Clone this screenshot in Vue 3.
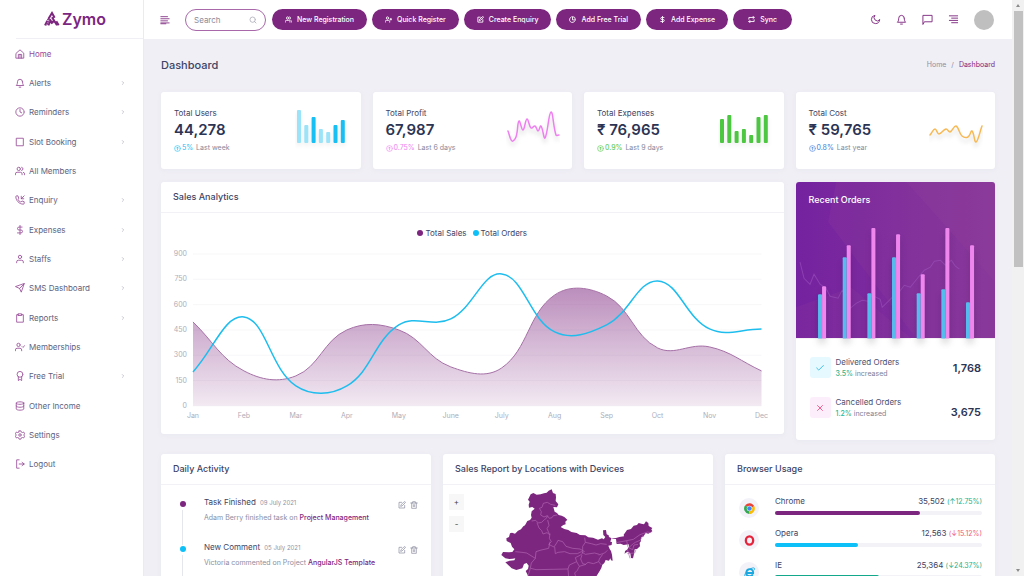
<script setup>
import { h } from 'vue'

const paths = {
  home: 'M3 10 12 2l9 8v12H3zM8 22v-9h8v9M12 13v9',
  bell: 'M18 9a6 6 0 0 0-12 0c0 7-3 9-3 9h18s-3-2-3-9M10 22h4',
  clock: 'M22 12a10 10 0 1 1-20 0 10 10 0 0 1 20 0M12 6v6l4 2',
  square: 'M4 3h16v18H4z',
  users: 'M17 21v-2a4 4 0 0 0-4-4H5a4 4 0 0 0-4 4v2M13 7a4 4 0 1 1-8 0 4 4 0 0 1 8 0M23 21v-2a4 4 0 0 0-3-3.9M16 3.1a4 4 0 0 1 0 7.8',
  phone: 'M22 17v3a2 2 0 0 1-2 2C10 22 2 13 2 4a2 2 0 0 1 2-2h3l2 6-2 2c1 3 4 6 7 7l2-2zM22 2l-7 7M15 3v6h6',
  dollar: 'M12 1v22M17 5H9.500a3.500 3.500 0 0 0 0 7h5a3.500 3.500 0 0 1 0 7H6',
  user: 'M20 21v-2a4 4 0 0 0-4-4H8a4 4 0 0 0-4 4v2M16 7a4 4 0 1 1-8 0 4 4 0 0 1 8 0',
  send: 'M22 2 11 13M22 2l-7 20-4-9-9-4z',
  clipboard: 'M8 4H4v18h16V4h-4M8 2h8v4H8z',
  userCheck: 'M16 21v-2a4 4 0 0 0-4-4H5a4 4 0 0 0-4 4v2M12.500 7a4 4 0 1 1-8 0 4 4 0 0 1 8 0M17 11l2 2 4-4',
  userPlus: 'M16 21v-2a4 4 0 0 0-4-4H5a4 4 0 0 0-4 4v2M12.500 7a4 4 0 1 1-8 0 4 4 0 0 1 8 0M20 8v6M17 11h6',
  award: 'M19 8a7 7 0 1 1-14 0 7 7 0 0 1 14 0M8 14v9l4-3 4 3v-9',
  database: 'M21 5c0 1.700-4 3-9 3S3 6.700 3 5s4-3 9-3 9 1.300 9 3zM3 5v14c0 1.700 4 3 9 3s9-1.300 9-3V5M3 12c0 1.700 4 3 9 3s9-1.300 9-3',
  settings: 'M15 12a3 3 0 1 1-6 0 3 3 0 0 1 6 0M10 2h4l1 3 3 1 3-1 2 4-2 3 2 3-2 4-3-1-3 1-1 3h-4l-1-3-3-1-3 1-2-4 2-3-2-3 2-4 3 1 3-1z',
  logout: 'M10 2H4v20h6M10 12h12M17 8l5 4-5 4',
  edit: 'M11 4H3v17h17v-8M18.500 2.500a2 2 0 0 1 3 3L12 15l-4 1 1-4z',
  pie: 'M21 16A10 10 0 1 1 8 3M22 12A10 10 0 0 0 12 2v10z',
  sync: 'M17 1l4 4-4 4M3 11V5h18M7 23l-4-4 4-4M21 13v6H3',
  moon: 'M21 13A9 9 0 1 1 11 3a7 7 0 0 0 10 10z',
  chat: 'M2 22V3h20v14H6z',
  menuLeft: 'M2 4h16M2 9h20M2 14h16M2 19h20M2 21h12',
  menuRight: 'M3 4h18M8 9h13M3 14h18M8 19h13',
  search: 'M19 11a8 8 0 1 1-16 0 8 8 0 0 1 16 0M21 21l-4-4',
  up: 'M22 12a10 10 0 1 1-20 0 10 10 0 0 1 20 0M12 17V8M8 11l4-4 4 4',
  trash: 'M2 6h20M5 6v16h14V6M8 6V2h8v4M10 11v6M14 11v6',
  chevron: 'M9 6l6 6-6 6',
  check: 'M20 6 9 17l-5-5',
  cross: 'M18 6 6 18M6 6l12 12'
}
const Icon = (props) =>
  h('svg', { class: 'icon', viewBox: '0 0 24 24', 'aria-hidden': 'true' }, [h('path', { d: paths[props.name] })])
Icon.props = ['name']

const menu = [
  ['Home', 'home', false], ['Alerts', 'bell', true], ['Reminders', 'clock', true],
  ['Slot Booking', 'square', true], ['All Members', 'users', false], ['Enquiry', 'phone', true],
  ['Expenses', 'dollar', true], ['Staffs', 'user', true], ['SMS Dashboard', 'send', true],
  ['Reports', 'clipboard', true], ['Memberships', 'userCheck', false], ['Free Trial', 'award', true],
  ['Other Income', 'database', false], ['Settings', 'settings', false], ['Logout', 'logout', false]
]
const actions = [
  ['New Registration', 'users'], ['Quick Register', 'userPlus'], ['Create Enquiry', 'edit'],
  ['Add Free Trial', 'pie'], ['Add Expense', 'dollar'], ['Sync', 'sync']
]
const tools = [['Dark mode', 'moon'], ['Notifications', 'bell'], ['Messages', 'chat'], ['Panel', 'menuRight']]

// Cubic spline through the points, with handles scaled by neighbour distance
function spline(pts, t = 0.4) {
  const handles = pts.map((p, i) => {
    const a = pts[i - 1] || p
    const b = pts[i + 1] || p
    const d1 = Math.hypot(p[0] - a[0], p[1] - a[1])
    const d2 = Math.hypot(b[0] - p[0], b[1] - p[1])
    const f1 = (t * d1) / (d1 + d2)
    const f2 = (t * d2) / (d1 + d2)
    const dx = b[0] - a[0]
    const dy = b[1] - a[1]
    return [[p[0] - f1 * dx, p[1] - f1 * dy], [p[0] + f2 * dx, p[1] + f2 * dy]]
  })
  return pts.reduce((d, p, i) =>
    i ? `${d} C${handles[i - 1][1]} ${handles[i][0]} ${p}` : `M${p}`, '')
}

const months = ['Jan', 'Feb', 'Mar', 'Apr', 'May', 'June', 'July', 'Aug', 'Sep', 'Oct', 'Nov', 'Dec']
const monthX = [32, 83, 135, 186, 238, 290, 341, 394, 446, 497, 549, 601]
const ticks = [900, 750, 600, 450, 300, 150, 0]
const tickY = (v) => 161 - (v / 900) * 152
const salesPath = spline([77, 126, 131, 85, 85, 122, 123, 50, 51, 103, 102, 126].map((y, i) => [monthX[i], y]))
const ordersPath = spline([127, 72, 141, 141, 80, 74, 29, 87, 80, 36, 84, 84].map((y, i) => [monthX[i], y]))

const stats = [
  { title: 'Total Users', value: '44,278', pct: '5%', note: 'Last week', tone: 'cyan',
    bars: [33, 18, 26, 14, 11, 18, 23], pale: [0, 1, 3, 4] },
  { title: 'Total Profit', value: '67,987', pct: '0.75%', note: 'Last 6 days', tone: 'pink',
    line: [[2, 22], [6, 32], [10, 28], [13, 12], [17, 21], [21, 10], [25, 19], [29, 17], [32, 22], [35, 17], [39, 29], [45, 3], [50, 26], [53, 26]] },
  { title: 'Total Expenses', value: '₹ 76,965', pct: '0.9%', note: 'Last 9 days', tone: 'green',
    bars: [24, 28, 12, 14, 8, 26, 28], pale: [] },
  { title: 'Total Cost', value: '₹ 59,765', pct: '0.8%', note: 'Last year', tone: 'amber',
    line: [[1, 26], [6, 20], [10, 25], [17, 20], [21, 23], [27, 17], [33, 27], [39, 28], [43, 22], [47, 33], [53, 17]] }
]
const blueTops = [112, 75, 111, 75, 111, 107, 120]
const pinkTops = [104, 63, 46, 52, 92, 46, 63]
const activity = [
  ['Task Finished', '09 July 2021', 'Adam Berry finished task on', 'Project Management', 'purple'],
  ['New Comment', '05 July 2021', 'Victoria commented on Project', 'AngularJS Template', 'blue']
]
const browsers = [
  { name: 'Chrome', count: '35,502', change: '(↑12.75%)', up: true, share: 70, tone: 'purple' },
  { name: 'Opera', count: '12,563', change: '(↓15.12%)', up: false, share: 40, tone: 'blue' },
  { name: 'IE', count: '25,364', change: '(↓24.37%)', up: true, share: 50, tone: 'teal' }
]
</script>

<template>
  <div class="app">
    <aside class="sidebar">
      <a class="brand" href="#">
        <svg class="mark" viewBox="0 0 48 44" aria-hidden="true">
          <path class="stroke" d="M3 41 10 27M13 22 24 4l8 14M13 41l7-14 5 9M24 17l15 24M32 30h-8M44 41l-7-12" />
          <path class="fine" d="M9 24h10M8 41l9-17" />
        </svg>
        <span>Zymo</span>
      </a>
      <nav class="menu">
        <a v-for="[label, icon, more] in menu" :key="label" href="#" :class="{ active: label === 'Home' }">
          <Icon :name="icon" /><span>{{ label }}</span><Icon v-if="more" class="more" name="chevron" />
        </a>
      </nav>
    </aside>

    <div class="main">
      <header class="topbar">
        <button class="plain" aria-label="Toggle menu"><Icon name="menuLeft" /></button>
        <label class="search">
          <input type="text" placeholder="Search" aria-label="Search" />
          <Icon name="search" />
        </label>
        <div class="actions">
          <button v-for="[label, icon] in actions" :key="label"><Icon :name="icon" />{{ label }}</button>
        </div>
        <div class="tools">
          <button v-for="[label, icon] in tools" :key="label" class="plain" :aria-label="label"><Icon :name="icon" /></button>
          <span class="avatar"></span>
        </div>
      </header>

      <main>
        <div class="heading">
          <h1>Dashboard</h1>
          <nav class="crumbs"><a href="#">Home</a><span>/</span><a href="#" class="current">Dashboard</a></nav>
        </div>

        <div class="grid">
          <section v-for="s in stats" :key="s.title" class="card stat" :class="s.tone">
            <div>
              <h2>{{ s.title }}</h2>
              <strong>{{ s.value }}</strong>
              <p><Icon name="up" /><b>{{ s.pct }}</b> {{ s.note }}</p>
            </div>
            <svg class="spark" viewBox="0 0 54 44" aria-hidden="true">
              <template v-if="s.bars">
                <rect v-for="(b, i) in s.bars" :key="i" :class="{ pale: s.pale.includes(i) }"
                  :x="2 + i * 7.3" :y="34 - b" width="4" :height="b" rx="1" />
              </template>
              <path v-else :d="spline(s.line)" />
            </svg>
          </section>

          <section class="card sales">
            <h2 class="title">Sales Analytics</h2>
            <div class="legend"><span class="purple">Total Sales</span><span class="blue">Total Orders</span></div>
            <svg class="chart" viewBox="0 0 623 189" role="img" aria-label="Sales and orders by month">
              <defs>
                <linearGradient id="area" gradientUnits="userSpaceOnUse" x1="0" y1="43" x2="0" y2="161">
                  <stop class="area-top" offset="0" />
                  <stop class="area-bottom" offset="1" />
                </linearGradient>
              </defs>
              <g v-for="t in ticks" :key="t">
                <path class="rule" :d="`M32 ${tickY(t)}H601`" />
                <text class="tick" x="26" :y="tickY(t) + 2">{{ t }}</text>
              </g>
              <path :d="`${salesPath}V161H32z`" fill="url(#area)" />
              <path class="sales-line" :d="salesPath" />
              <path class="orders-line" :d="ordersPath" />
              <text v-for="(m, i) in months" :key="m" class="month" :x="monthX[i]" y="173">{{ m }}</text>
            </svg>
          </section>

          <section class="card orders">
            <div class="panel">
              <h2>Recent Orders</h2>
              <svg viewBox="0 0 199 156" aria-hidden="true">
                <path class="facet" d="M40 0h159v156H120L32 40z" />
                <path class="facet" d="M0 125 55 105l60 51H0zM110 0h89v100z" />
                <path class="trace" d="M4 80l4 16 6 6 4-10 6 10 6 4 4 8 8 2 4-8 6 6 2 12 6-5 6-3 6 1 4-6 8 4 2 8 10-10 6-4 6-8 6 2 8-10 6-7 6-3 4-6 6-1 5 5 6-5 4 6 4 3" />
                <g v-for="(y, i) in blueTops" :key="i">
                  <path class="b-blue" :d="`M${22 + i * 24.6} 156V${y + 1}q0-1 1-1h2q1 0 1 1V156z`" />
                  <path class="b-pink" :d="`M${26 + i * 24.6} 156V${pinkTops[i] + 1}q0-1 1-1h2q1 0 1 1V156z`" />
                </g>
              </svg>
            </div>
            <div class="order">
              <span class="tile ok"><Icon name="check" /></span>
              <div><h3>Delivered Orders</h3><p><b>3.5%</b> increased</p></div>
              <strong>1,768</strong>
            </div>
            <div class="order">
              <span class="tile bad"><Icon name="cross" /></span>
              <div><h3>Cancelled Orders</h3><p><b>1.2%</b> increased</p></div>
              <strong class="low">3,675</strong>
            </div>
          </section>
        </div>

        <div class="grid thirds">
          <section class="card">
            <h2 class="title">Daily Activity</h2>
            <ul class="timeline">
              <li v-for="[title, date, text, link, tone] in activity" :key="title" :class="tone">
                <div>
                  <h3>{{ title }} <time>{{ date }}</time></h3>
                  <p>{{ text }} <a href="#">{{ link }}</a></p>
                </div>
                <button class="plain" aria-label="Edit"><Icon name="edit" /></button>
                <button class="plain" aria-label="Delete"><Icon name="trash" /></button>
              </li>
            </ul>
          </section>

          <section class="card">
            <h2 class="title">Sales Report by Locations with Devices</h2>
            <div class="map">
              <div class="zoom"><button aria-label="Zoom in">+</button><button aria-label="Zoom out">-</button></div>
              <svg viewBox="9 130 810 300" role="img" aria-label="Map of India">
                <path class="land" d="M272 158l8-4 10 5 12-1 10-3 8-2 6-6 9-4 4 11 8 3 1 10-1 11 8 10-4 9-11-1 4 14 7 4 5 6 9 2 8 4 9 8-6 6 1 8-7 2-8 6 11 6 12 3 9 6 16 3 10 6 16 1 9 6 14 1 15 6 12-4 5 3 5-7-6-6-1-14 9-1 2 13 6 3 1 5 8 4 13-1 10-3 14-2-1-5 10-14 12-3 8-10 10-2 5-6 8 2 8 2 6-9 7 5 1 9 11 6-3 4 3 6-12 7-8-2-7 11-6 1-2 14-3 3 1 11-9 8-7 1-2 14-3 13-6-1-2-14-7-5-7 3-3 4 1-9 6-4 6-9-1-7-15 2-9-4-12 1-2-15-9-1-5-1-3 10 5 1-1 9-10 2 4 10 4 6 3 11 2 18-5-1-2-6-4 7-10-2-4 9-6 5-3 10-5 9-10 16H265l-8-16 7-6 2-10-6-8-8 3-5 13-18 5-14-5-19-18 13-5 14-1 3-6-8 1-10 1-12-2-12-10 5-9 18 1 10-1 6-8-7-8-4-11-12-6-1-8 8-4 3-11 6-2 9 3 9-9 9-4 7-9 5-3 7-13 8-3 5-7-2-8 2-11 9-8-7-5-10 2-1-9 3-9-5-6z" />
                <path class="border" d="M298 200l8-3 4-12 12-3 10 6 14 3M298 200l6 10-2 10 10 6 10-4 6 8 8-2 4-6 12-2M275 238l12-2 8 8 10-2 8-8 6-4 4-8M291 243l6 16 8 8 4 10 12-4 8 6-8-18 6-10-4-16M330 276l-2 14 6 10-8 8 16 8 8-12 4-8 14 4 10 14 20 6 22 2 14 8M330 300l-4 20-26 6-12 4-2 20-26-16-14-2-20-2M286 350l-12 14-4 20-8 24M344 316l2 20 8-4 20-2 16 6 22 0 12-6 12 8 28-4 14 4M434 288l2 14-8 12 0 20-6 6M436 302l18 4 14 4 14-4 18 2M476 340l18-6 8-8M488 338l-10 14-2 8-16 6-16-4-8 6-8-2-6-14 4-12M422 340l-16 8 4 12-22 10-4 12-96 2-16-4M384 382l2 26M410 360l8 14-6 12-8 8 4 14M418 374l20-6M476 360l8 10M528 303l32-6 20-4 20-14 22-8 12 2M560 297l4 20M566 318l14-12 6-4 14-6 10-16M566 318l12 6 4-14 12-2M562 336l22-2 4-10M562 322l4 14 4 14" />
              </svg>
            </div>
          </section>

          <section class="card">
            <h2 class="title">Browser Usage</h2>
            <div v-for="b in browsers" :key="b.name" class="browser">
              <span class="logo">
                <svg v-if="b.name === 'Chrome'" viewBox="0 0 24 24" aria-hidden="true">
                  <path fill="#ea4335" d="M12 12 2.500 5a12 12 0 0 1 20 2z" />
                  <path fill="#fbbc05" d="M12 12 22.500 7A12 12 0 0 1 11 24z" />
                  <path fill="#34a853" d="M12 12 11 24A12 12 0 0 1 2.500 5z" />
                  <circle fill="#fff" cx="12" cy="12" r="6" /><circle fill="#4285f4" cx="12" cy="12" r="5" />
                </svg>
                <svg v-else-if="b.name === 'Opera'" viewBox="0 0 24 24" aria-hidden="true">
                  <ellipse cx="12" cy="12" rx="8" ry="9" fill="none" stroke="#e5243b" stroke-width="5" />
                </svg>
                <svg v-else viewBox="0 0 24 24" aria-hidden="true">
                  <path fill="none" stroke="#1ba8e0" stroke-width="4" d="M5 13h15c1-11-15-11-15 0 0 9 12 9 14 3" />
                  <path fill="none" stroke="#1ba8e0" stroke-width="2" d="M3 22c-6-5 8-20 18-20 3 0 2 3 1 5" />
                </svg>
              </span>
              <div class="usage">
                <div class="row"><span>{{ b.name }}</span><span>{{ b.count }} <small :class="{ up: b.up }">{{ b.change }}</small></span></div>
                <div class="track"><div class="fill" :class="b.tone" :style="{ width: b.share + '%' }"></div></div>
              </div>
            </div>
          </section>
        </div>
      </main>
    </div>

    <div class="scroll" aria-hidden="true"><i class="arrow"></i><i class="thumb"></i><i class="arrow down"></i></div>
  </div>
</template>

<style>
body { overflow: hidden; }
</style>

<style scoped>
* { box-sizing: border-box; margin: 0; }
.app {
  --purple: #7d267f;
  --blue: #0dc0f8;
  display: grid;
  grid-template-columns: 144px minmax(0, 1fr) 12px;
  height: 100vh;
  overflow: hidden;
  background: #f0eff5;
  color: #3d4465;
  font: 8px/12px Inter, "Open Sans", sans-serif;
}
a { color: inherit; text-decoration: none; }
button, input { font: inherit; color: inherit; }
svg { display: block; }
ul { list-style: none; padding: 0; }
.icon { width: 10px; height: 10px; flex: none; fill: none; stroke: currentColor; stroke-width: 2; stroke-linejoin: round; stroke-linecap: round; }
.plain { display: flex; padding: 0; border: 0; background: none; }

.sidebar { display: flex; flex-direction: column; height: 100vh; padding-bottom: 97px; background: #fff; border-right: 1px solid #ebeaf2; }
.brand { display: flex; align-items: center; gap: 2px; height: 39px; margin-left: 16px; padding-left: 28px; border-bottom: 1px solid #f0eff5; color: var(--purple); font: 600 16px/20px Inter, sans-serif; }
.mark { width: 16px; height: 16px; }
.stroke { fill: none; stroke: var(--purple); stroke-width: 6; }
.fine { fill: none; stroke: var(--purple); stroke-width: 3; }
.menu { flex: 1; display: flex; flex-direction: column; }
.menu a { flex: 1; display: flex; align-items: center; gap: 4px; padding: 0 17px 0 15px; color: #5d6380; }
.menu .icon, .menu .active { color: #964a98; }
.menu .more { width: 6px; height: 6px; margin-left: auto; color: #9497ab; }

.topbar { display: flex; align-items: center; height: 39px; padding: 0 18px 0 16px; background: #fff; color: var(--purple); }
.search { display: flex; align-items: center; width: 81px; height: 22px; margin: 0 6px 0 15px; padding: 0 8px; border: 1px solid #a868aa; border-radius: 11px; }
.search input { flex: 1; min-width: 0; padding: 0; border: 0; outline: 0; background: none; }
.search input::placeholder { color: #8b8c9a; opacity: 1; }
.search .icon { width: 8px; height: 8px; color: #9b9cab; }
.actions { display: flex; gap: 5px; }
.actions button { display: flex; align-items: center; justify-content: center; gap: 5px; min-width: 59px; height: 21px; padding: 0 13px; border: 0; border-radius: 11px; background: var(--purple); color: #fff; font-size: 7px; font-weight: 500; white-space: nowrap; }
.actions .icon { width: 7px; height: 7px; stroke-width: 3; }
.tools { display: flex; align-items: center; gap: 15px; margin-left: auto; }
.tools .icon { width: 11px; height: 11px; }
.avatar { width: 20px; height: 20px; border-radius: 50%; background: #bfbfbf; }

main { padding: 0 17px; }
.heading { display: flex; align-items: center; justify-content: space-between; height: 53px; padding-bottom: 2px; }
h1 { font-size: 11px; font-weight: 500; line-height: 16px; }
.crumbs { display: flex; gap: 5px; font-size: 7px; color: #8b8ea5; }
.current { color: var(--purple); }
.grid { display: grid; grid-template-columns: repeat(4, minmax(0, 1fr)); align-items: start; gap: 13px 12px; }
.thirds { grid-template-columns: repeat(3, minmax(0, 1fr)); margin-top: 14px; }
.card { background: #fff; border-radius: 3px; box-shadow: 0 1px 5px #e8e7f0; overflow: hidden; }
h2, h3 { font-size: 8px; font-weight: 400; }
.title { padding: 9px 12px; border-bottom: 1px solid #f1f1f6; font-size: 9px; font-weight: 500; }

.stat { display: flex; align-items: center; justify-content: space-between; height: 77px; padding: 0 12px 0 13px; }
.stat strong { display: block; font-size: 15px; line-height: 22px; font-weight: 600; color: #2c3454; }
.stat p { display: flex; align-items: center; gap: 1px; margin-top: 1px; font-size: 7px; white-space: pre; color: #85889c; }
.stat b { font-weight: 400; }
.stat .icon { width: 7px; height: 7px; }
.stat .icon, .stat b { color: var(--tone); }
.spark { width: 54px; height: 44px; }
.spark rect { fill: var(--tone); filter: drop-shadow(0 3px 2px #0001); }
.spark .pale { fill: #9ae3f8; }
.spark path { fill: none; stroke: var(--tone); stroke-width: 1.5; stroke-linecap: round; filter: drop-shadow(0 4px 2px #0002); }
.cyan { --tone: #17bff5; }
.pink { --tone: #ee7ff0; }
.green { --tone: #4dc742; }
.amber { --tone: #f7b955; }
.amber .icon, .amber b { color: #3f7be0; }

.sales { grid-column: span 3; }
.legend { display: flex; justify-content: center; gap: 6px; padding: 14px 0 6px; }
.legend span { display: flex; align-items: center; gap: 2px; }
.legend span::before { content: ""; width: 6px; height: 6px; border-radius: 50%; background: var(--dot); }
.purple { --dot: var(--purple); }
.blue { --dot: var(--blue); }
.teal { --dot: #13a88c; }
.chart { width: 100%; }
.area-top { stop-color: #7d267f; stop-opacity: 0.52; }
.area-bottom { stop-color: #7d267f; stop-opacity: 0.1; }
.rule { stroke: #f7f7f9; }
.tick, .month { font-size: 7px; fill: #adaeb9; text-anchor: middle; }
.tick { text-anchor: end; }
.sales-line { fill: none; stroke: #a56fa6; stroke-width: 1; }
.orders-line { fill: none; stroke: #1dbdee; stroke-width: 1.5; }

.orders { padding-bottom: 20px; }
.panel { position: relative; background: linear-gradient(90deg, #7522a0, #86369a); }
.panel h2 { position: absolute; left: 13px; top: 12px; color: #fff; font-size: 9px; font-weight: 500; }
.panel svg { width: 100%; overflow: visible; }
.facet { fill: #9a4a9a; opacity: 0.15; }
.trace { fill: none; stroke: #a45cc4; opacity: 0.5; }
.b-blue { fill: #58c3f5; filter: drop-shadow(0 5px 3px #0002); }
.b-pink { fill: #ee86ee; filter: drop-shadow(0 5px 3px #0002); }
.order { display: flex; align-items: center; gap: 5px; margin-top: 17px; padding: 0 14px; height: 25px; color: #4c5170; }
.order + .order { margin-top: 15px; }
.order div { flex: 1; }
.order p { font-size: 7px; color: #7e8196; }
.order b { font-weight: 500; color: #2eb690; }
.order strong { font-size: 11px; line-height: 16px; font-weight: 600; color: #2c3454; }
.order .low { align-self: flex-end; }
.tile { display: grid; place-items: center; width: 21px; height: 21px; border-radius: 3px; }
.ok { background: #e6f9ff; color: #1db7e8; }
.bad { background: #fdeefb; color: #f0457b; }

.timeline { padding: 11px 13px 0 17px; }
.timeline li { position: relative; display: flex; gap: 4px; height: 45px; padding-left: 26px; }
.timeline li div { flex: 1; }
.timeline li::before { content: ""; position: absolute; left: 2px; top: 5px; width: 6px; height: 6px; border-radius: 50%; background: var(--dot); }
.timeline li::after { content: ""; position: absolute; left: 4px; top: 14px; bottom: -4px; width: 1px; background: #e5e5ee; }
.timeline time { margin-left: 2px; font-size: 6px; color: #9093a6; }
.timeline p { margin-top: 3px; font-size: 7px; color: #8b8ea2; }
.timeline a { color: var(--purple); font-weight: 500; }
.timeline button { align-self: flex-start; margin-top: 5px; color: #85889c; }
.timeline .icon { width: 8px; height: 8px; }

.map { position: relative; }
.map > svg { width: 100%; }
.zoom { position: absolute; left: 6px; top: 9px; display: grid; gap: 6px; }
.zoom button { width: 15px; height: 16px; padding: 0; border: 0; background: #f7f7f8; color: #444; }
.land { fill: var(--purple); }
.border { fill: none; stroke: #b067b2; stroke-width: 2; stroke-linejoin: round; }

.browser { display: flex; align-items: center; gap: 16px; height: 32px; padding: 0 13px 0 14px; }
.title + .browser { margin-top: 7px; }
.logo { display: grid; place-items: center; width: 20px; height: 20px; border-radius: 50%; background: #f3f2f9; }
.logo svg { width: 11px; height: 11px; }
.usage { flex: 1; align-self: flex-start; margin-top: 3px; }
.row { display: flex; justify-content: space-between; }
.row small { font-size: 7px; color: #f0587d; }
.row .up { color: #22b08a; }
.track { height: 4px; margin-top: 3px; border-radius: 2px; background: #f3f3f7; }
.fill { height: 4px; border-radius: 2px; background: var(--dot); }

.scroll { display: flex; flex-direction: column; align-items: center; height: 100vh; padding: 4px 0; background: #f1f1f2; }
.arrow { border: 2px solid transparent; border-bottom: 3px solid #8b8b8b; border-top: 0; }
.thumb { width: 9px; height: 256px; margin-top: 4px; background: #c1c1c1; }
.down { margin-top: auto; transform: rotate(180deg); }
</style>
